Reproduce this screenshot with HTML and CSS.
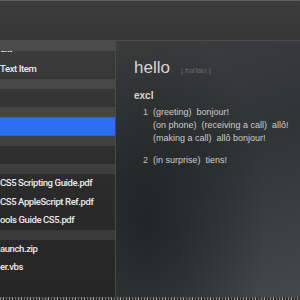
FILE: index.html
```html
<!DOCTYPE html>
<html lang="en">
<head>
  <meta charset="UTF-8">
  <title>Dictionary Lookup</title>
  <link rel="stylesheet" href="styles.css">
</head>
<body>

  <div class="window">
    <div class="toolbar"></div>

    <div class="main">
      <div class="sidebar">
        <div class="band"></div>
        <div class="row cut"><span>ext</span></div>
        <div class="row">Text Item</div>
        <div class="band"></div>
        <div class="row"></div>
        <div class="band"></div>
        <div class="row selected"></div>
        <div class="band"></div>
        <div class="row"></div>
        <div class="band"></div>
        <div class="row">CS5 Scripting Guide.pdf</div>
        <div class="row">CS5 AppleScript Ref.pdf</div>
        <div class="row">ools Guide CS5.pdf</div>
        <div class="band"></div>
        <div class="row">aunch.zip</div>
        <div class="row">er.vbs</div>
      </div>

      <div class="detail">
        <div class="headword">
          <span class="word">hello</span>
          <span class="phon">| hə'laʊ |</span>
        </div>
        <div class="pos">excl</div>

        <div class="sense">
          <span class="num">1</span>
          <div class="glosses">
            <div class="line"><span>(greeting)</span><span>bonjour!</span></div>
            <div class="line"><span>(on phone)</span><span>(receiving a call)</span><span>allô!</span></div>
            <div class="line"><span>(making a call)</span><span>allô bonjour!</span></div>
          </div>
        </div>

        <div class="sense second">
          <span class="num">2</span>
          <div class="glosses">
            <div class="line"><span>(in surprise)</span><span>tiens!</span></div>
          </div>
        </div>
      </div>
    </div>

    <div class="footer"></div>
  </div>

</body>
</html>
```

FILE: styles.css
```css
body {
  margin: 0;
  padding: 0;
  width: 300px;
  height: 300px;
  overflow: hidden;
  background: #2a2a2a;
  font-family: "Liberation Sans", Arial, sans-serif;
}

.window {
  display: flex;
  flex-direction: column;
  height: 300px;
}

.toolbar {
  height: 39px;
  border-top: 1px solid #5e5e5e;
  border-bottom: 1px solid #4b4b4b;
  background: linear-gradient(#3c3c3c, #363636);
}

.main {
  display: flex;
  flex: 1;
  min-height: 0;
}

/* left list */
.sidebar {
  width: 115px;
  border-right: 1px solid #474a4a;
  background: linear-gradient(#3c3c3c, #2a2a2a 60%, #262626);
  overflow: hidden;
}

.band {
  height: 10px;
  background: rgba(255, 255, 255, 0.085);
}

.row {
  height: 18.5px;
  line-height: 18.5px;
  font-family: Roboto, "Liberation Sans", sans-serif;
  font-weight: 500;
  font-size: 9.5px;
  letter-spacing: -0.4px;
  color: #ececec;
  white-space: nowrap;
  overflow: hidden;
}

.row.cut {
  height: 9px;
}

.row.cut span {
  display: block;
  margin-top: -11px;
}

.row.selected {
  background: #2c6ef0;
  box-shadow: inset 0 1px 0 #2a62d6, inset 0 -1px 0 #2a62d6;
}

/* right definition panel */
.detail {
  flex: 1;
  padding: 17px 0 0 18px;
  color: #cdcdcd;
  background:
    radial-gradient(ellipse 120px 200px at 30px 180px, rgba(30, 36, 36, 0.9), rgba(30, 36, 36, 0) 100%),
    linear-gradient(160deg, #3d3f3f 0%, #2f3434 45%, #434949 100%);
}

.headword {
  display: flex;
  align-items: baseline;
  gap: 11px;
  line-height: 20px;
}

.word {
  font-size: 17px;
  color: #d6d6d6;
  font-weight: 300;
}

.phon {
  font-size: 8px;
  color: #6c6c6c;
}

.pos {
  margin-top: 8px;
  font-size: 10px;
  line-height: 14px;
  font-weight: bold;
  color: #d8d8d8;
}

.sense {
  display: flex;
  margin-top: 3px;
  padding-left: 9px;
  font-size: 9px;
  line-height: 13px;
}

.sense.second {
  margin-top: 9px;
}

.num {
  width: 10px;
  color: #bdbdbd;
}

.line {
  display: flex;
  gap: 5px;
  white-space: nowrap;
}

.footer {
  height: 3px;
  background:
    repeating-linear-gradient(90deg, #7a7a7a 0 1px, #3a3a3a 1px 3px, #999 3px 4px, #2e2e2e 4px 6px, #666 6px 7px, #333 7px 9px);
}
```
